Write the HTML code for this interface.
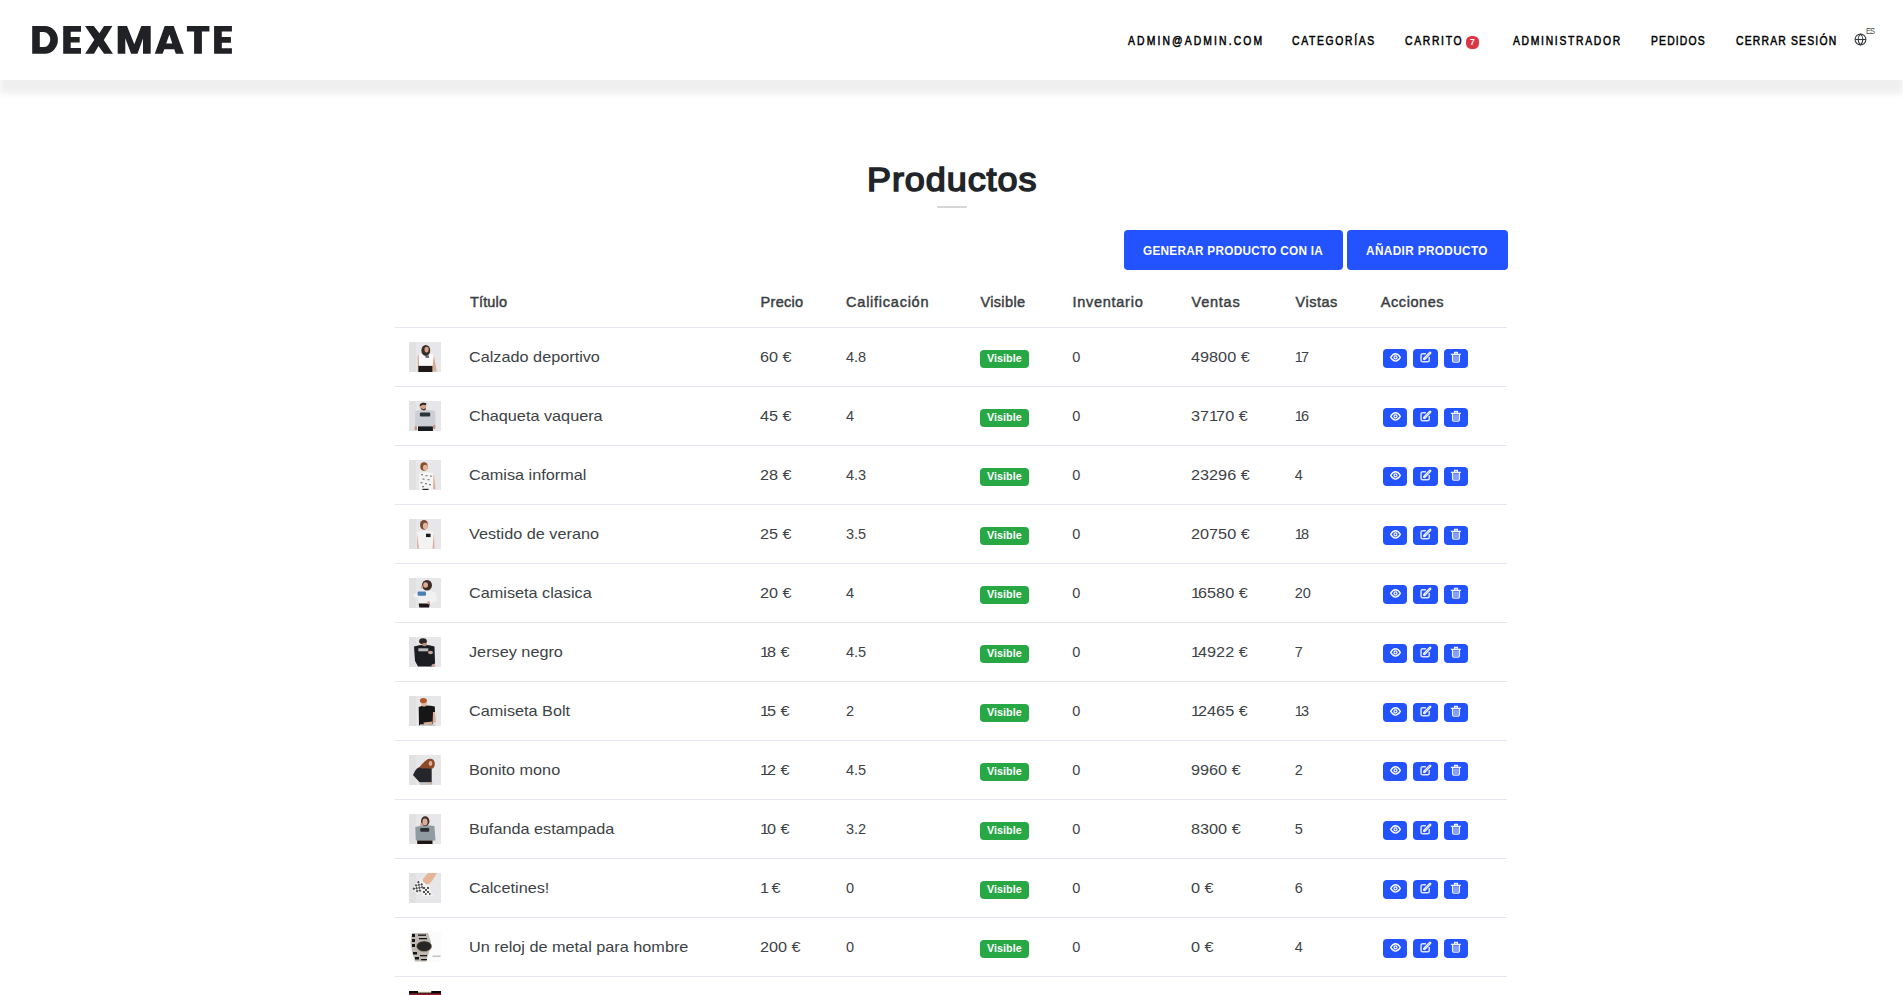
<!DOCTYPE html>
<html lang="es">
<head>
<meta charset="utf-8">
<title>Productos</title>
<style>
*{box-sizing:border-box;margin:0;padding:0}
html,body{width:1903px;height:995px;overflow:hidden;background:#fff;font-family:"Liberation Sans",sans-serif;color:#212529}
.t{position:absolute;line-height:1;white-space:nowrap}
.hdr{position:absolute;left:0;top:0;width:1903px;height:80px;background:#fff;box-shadow:0 14px 6px rgba(0,0,0,0.063)}

.badge{position:absolute;background:#dc3545;border-radius:4px}
.uline{position:absolute;left:937px;top:206px;width:30px;height:2px;background:#d6d6d6}
.btn{position:absolute;top:230px;height:40px;background:#2352ff;border-radius:4px}
.hl{position:absolute;left:395px;width:1112px;height:1px;background:#e3e6f0}
.img{position:absolute;left:409px;width:32px;height:30px;background:#e8e8ea;overflow:hidden}
.vis{position:absolute;left:980px;width:49px;height:18px;background:#28a745;border-radius:4px}
.ab{position:absolute;width:24px;height:19px;background:#2352ff;border-radius:4px}
.ab svg{position:absolute;left:5px;top:2px}
</style>
</head>
<body>
<div class="hdr"></div>
<div class="uline"></div>
<div class="btn" style="left:1124px;width:219px"></div>
<div class="btn" style="left:1347px;width:161px"></div>
<svg style="position:absolute;left:0;top:0" width="260" height="80" viewBox="0 0 260 80"><g fill="#202124" fill-rule="evenodd">
<path d="M32.2 25.9H45A12.9 13.9 0 0 1 45 53.7H32.2ZM39.8 32V47.1H43.5A6.8 7.55 0 0 0 43.5 32Z"/>
<path d="M63.2 25.9H81V31.7H70.7V37H79.7V42.6H70.7V47.9H81V53.8H63.2Z"/>
<path d="M85 25.9H93.8L99.4 33.3L104 25.9H112.4L103.8 39.9L112.9 53.8H104.1L98.5 45.9L94 53.8H85.1L94.3 39.8Z"/>
<path d="M117.7 25.9H127L134.3 44.2L141.3 25.9H150.7V53.7H143V38.5L137.5 53.7H131.1L125.3 38.3V53.7H117.7Z"/>
<path d="M154.8 53.7L164.7 25.9H173.7L183.8 53.7H175.8L174.3 49.2H164.3L162.6 53.7ZM169.4 34.4L172.3 43.6H166.2Z"/>
<path d="M186.9 25.9H209.4V31.5H201.9V53.7H194.1V31.5H186.9Z"/>
<path d="M214.1 25.9H231.9V31.6H221.8V37.1H230.9V42.7H221.8V48.2H231.9V53.8H214.1Z"/>
</g></svg>
<div class="t " style="left:1128.10px;top:34.86px;font-size:12.21px;font-weight:400;letter-spacing:2.495px;color:#000;transform:scaleX(0.85);transform-origin:0 0;-webkit-text-stroke:0.5px #000">ADMIN@ADMIN.COM</div>
<div class="t " style="left:1292.10px;top:34.86px;font-size:12.21px;font-weight:400;letter-spacing:1.952px;color:#000;transform:scaleX(0.85);transform-origin:0 0;-webkit-text-stroke:0.5px #000">CATEGORÍAS</div>
<div class="t " style="left:1404.70px;top:34.86px;font-size:12.21px;font-weight:400;letter-spacing:1.978px;color:#000;transform:scaleX(0.85);transform-origin:0 0;-webkit-text-stroke:0.5px #000">CARRITO</div>
<div class="t " style="left:1512.80px;top:34.86px;font-size:12.21px;font-weight:400;letter-spacing:1.984px;color:#000;transform:scaleX(0.85);transform-origin:0 0;-webkit-text-stroke:0.5px #000">ADMINISTRADOR</div>
<div class="t " style="left:1650.90px;top:34.86px;font-size:12.21px;font-weight:400;letter-spacing:1.370px;color:#000;transform:scaleX(0.85);transform-origin:0 0;-webkit-text-stroke:0.5px #000">PEDIDOS</div>
<div class="t " style="left:1735.50px;top:34.86px;font-size:12.21px;font-weight:400;letter-spacing:1.400px;color:#000;transform:scaleX(0.85);transform-origin:0 0;-webkit-text-stroke:0.5px #000">CERRAR SESIÓN</div>
<div style="position:absolute;left:1466px;top:36px;width:13px;height:13px;border-radius:5.5px;background:#dc3545"></div>
<svg style="position:absolute;left:1850px;top:30px" width="20" height="20" viewBox="0 0 20 20"><g fill="none" stroke="#343a40" stroke-width="1.1"><circle cx="10.5" cy="9.5" r="5.4"/><path d="M10.5 4.1C7.4 6.5 7.4 12.5 10.5 14.9C13.6 12.5 13.6 6.5 10.5 4.1Z"/><path d="M5.1 9.5H15.9"/></g></svg><div class="t " style="left:1470.00px;top:37.62px;font-size:8.60px;font-weight:700;letter-spacing:0.000px;color:#fff;">7</div><div class="t " style="left:1865.80px;top:27.23px;font-size:8.94px;font-weight:400;letter-spacing:-1.101px;color:#4a4a4a;transform:scaleX(0.85);transform-origin:0 0;">ES</div>
<div class="t " style="left:866.60px;top:164.31px;font-size:32.70px;font-weight:400;letter-spacing:0.857px;color:#212529;transform:scaleX(1.1);transform-origin:0 0;-webkit-text-stroke:1.5px #212529">Productos</div>
<div class="t " style="left:1143.00px;top:243.88px;font-size:13.37px;font-weight:700;letter-spacing:0.326px;color:#fff;transform:scaleX(0.88);transform-origin:0 0;">GENERAR PRODUCTO CON IA</div>
<div class="t " style="left:1366.40px;top:243.88px;font-size:13.37px;font-weight:700;letter-spacing:0.442px;color:#fff;transform:scaleX(0.88);transform-origin:0 0;">AÑADIR PRODUCTO</div>
<div class="t " style="left:469.90px;top:294.89px;font-size:14.53px;font-weight:400;letter-spacing:0.170px;color:#3a3e42;-webkit-text-stroke:0.45px #3a3e42">Título</div>
<div class="t " style="left:760.60px;top:294.89px;font-size:14.53px;font-weight:400;letter-spacing:0.279px;color:#3a3e42;-webkit-text-stroke:0.45px #3a3e42">Precio</div>
<div class="t " style="left:846.10px;top:294.89px;font-size:14.53px;font-weight:400;letter-spacing:0.744px;color:#3a3e42;-webkit-text-stroke:0.45px #3a3e42">Calificación</div>
<div class="t " style="left:980.40px;top:294.89px;font-size:14.53px;font-weight:400;letter-spacing:0.357px;color:#3a3e42;-webkit-text-stroke:0.45px #3a3e42">Visible</div>
<div class="t " style="left:1072.40px;top:294.89px;font-size:14.53px;font-weight:400;letter-spacing:0.729px;color:#3a3e42;-webkit-text-stroke:0.45px #3a3e42">Inventario</div>
<div class="t " style="left:1191.60px;top:294.89px;font-size:14.53px;font-weight:400;letter-spacing:0.730px;color:#3a3e42;-webkit-text-stroke:0.45px #3a3e42">Ventas</div>
<div class="t " style="left:1295.60px;top:294.89px;font-size:14.53px;font-weight:400;letter-spacing:0.477px;color:#3a3e42;-webkit-text-stroke:0.45px #3a3e42">Vistas</div>
<div class="t " style="left:1380.80px;top:294.89px;font-size:14.53px;font-weight:400;letter-spacing:0.545px;color:#3a3e42;-webkit-text-stroke:0.45px #3a3e42">Acciones</div>
<div class="hl" style="top:327px"></div>
<div class="t " style="left:468.80px;top:349.72px;font-size:14.50px;font-weight:400;letter-spacing:0.000px;color:#3d4246;transform:scaleX(1.12);transform-origin:0 0;">Calzado deportivo</div>
<div class="t num" style="left:759.90px;top:349.72px;font-size:14.50px;font-weight:400;letter-spacing:0.000px;color:#3d4246;transform:scaleX(1.12);transform-origin:0 0;letter-spacing:0px">60 €</div>
<div class="t num" style="left:846.00px;top:349.72px;font-size:14.50px;font-weight:400;letter-spacing:0.000px;color:#3d4246;">4.8</div>
<div class="t num" style="left:1072.20px;top:349.72px;font-size:14.50px;font-weight:400;letter-spacing:0.000px;color:#3d4246;">0</div>
<div class="t num" style="left:1190.60px;top:349.72px;font-size:14.50px;font-weight:400;letter-spacing:0.000px;color:#3d4246;transform:scaleX(1.12);transform-origin:0 0;letter-spacing:0px">49800 €</div>
<div class="t num" style="left:1294.80px;top:349.72px;font-size:14.50px;font-weight:400;letter-spacing:0.000px;color:#3d4246;"><span style="margin-right:-1.8px">1</span>7</div>
<svg class="img" style="top:342px" width="32" height="30" viewBox="0 0 32 30"><rect width="32" height="30" fill="#e7e7e9"/><rect x="0" y="0" width="7" height="30" fill="#dcdcde" opacity="0.5"/><path d="M8.6 13.5L11 12.5L11.3 29.5L8.8 29.5Z" fill="#d8ab93"/><path d="M22.3 13L25 13.5L27.7 29.5L24.5 29.5Z" fill="#d8ab93"/><path d="M9.7 12.5Q16 10.5 25 12.5L23.5 24H10.2Z" fill="#f8f8f8"/><rect x="9.4" y="23.9" width="14.1" height="6.1" fill="#1f1818"/><ellipse cx="16.8" cy="8.4" rx="4.4" ry="5.5" fill="#3a2b24"/><ellipse cx="17.6" cy="7.6" rx="2.1" ry="2.8" fill="#d6a48c"/><rect x="16.5" y="13.5" width="3.5" height="2.3" fill="#556070"/></svg>
<div class="vis" style="top:350px"></div>
<div class="t " style="left:987.10px;top:352.80px;font-size:10.75px;font-weight:700;letter-spacing:0.023px;color:#fff;">Visible</div>
<div class="ab" style="left:1383px;top:349px"><svg style="position:absolute;left:0;top:0" width="24" height="19" viewBox="0 0 24 19"><g fill="none" stroke="#fff" stroke-width="1.35"><path d="M7.7 8.4C9 6.1 10.5 4.75 12.5 4.75C14.5 4.75 16 6.1 17.3 8.4C16 10.7 14.5 12.05 12.5 12.05C10.5 12.05 9 10.7 7.7 8.4Z"/><circle cx="12.5" cy="8.4" r="1.5" stroke-width="1.2"/></g></svg></div>
<div class="ab" style="left:1413px;top:349px;width:25px"><svg style="position:absolute;left:0;top:0" width="25" height="19" viewBox="0 0 25 19"><path d="M12.9 4.65H9.6Q8.05 4.65 8.05 6.2V11.3Q8.05 12.85 9.6 12.85H14.7Q16.25 12.85 16.25 11.3V8" fill="none" stroke="#dfe5ff" stroke-width="1.5"/><path d="M11.4 9.7L17.1 3.9" stroke="#f4f6ff" stroke-width="2.7" stroke-linecap="round"/><path d="M10.3 11.1L11.0 8.9L12.3 10.3Z" fill="#f4f6ff"/><path d="M11.9 9.2L16.9 4.1" stroke="#8ea2ff" stroke-width="0.6"/></svg></div>
<div class="ab" style="left:1444px;top:349px"><svg style="position:absolute;left:0;top:0" width="24" height="19" viewBox="0 0 24 19"><rect x="9.3" y="6.4" width="5.4" height="5.6" fill="#fff" opacity="0.45"/><g fill="none" stroke="#f0f3ff" stroke-width="1.3"><path d="M8.6 6V11.8Q8.6 13.1 9.9 13.1H14.1Q15.4 13.1 15.4 11.8V6"/><path d="M6.8 5.35H16.9"/><path d="M10.6 5.2V3.5H13.4V5.2"/></g></svg></div>
<div class="hl" style="top:386px"></div>
<div class="t " style="left:468.80px;top:408.72px;font-size:14.50px;font-weight:400;letter-spacing:0.000px;color:#3d4246;transform:scaleX(1.12);transform-origin:0 0;">Chaqueta vaquera</div>
<div class="t num" style="left:759.90px;top:408.72px;font-size:14.50px;font-weight:400;letter-spacing:0.000px;color:#3d4246;transform:scaleX(1.12);transform-origin:0 0;letter-spacing:0px">45 €</div>
<div class="t num" style="left:846.00px;top:408.72px;font-size:14.50px;font-weight:400;letter-spacing:0.000px;color:#3d4246;">4</div>
<div class="t num" style="left:1072.20px;top:408.72px;font-size:14.50px;font-weight:400;letter-spacing:0.000px;color:#3d4246;">0</div>
<div class="t num" style="left:1190.60px;top:408.72px;font-size:14.50px;font-weight:400;letter-spacing:0.000px;color:#3d4246;transform:scaleX(1.12);transform-origin:0 0;letter-spacing:0px">37<span style="margin-right:-1.8px">1</span>70 €</div>
<div class="t num" style="left:1294.80px;top:408.72px;font-size:14.50px;font-weight:400;letter-spacing:0.000px;color:#3d4246;"><span style="margin-right:-1.8px">1</span>6</div>
<svg class="img" style="top:401px" width="32" height="30" viewBox="0 0 32 30"><rect width="32" height="30" fill="#e7e7e9"/><rect x="0" y="0" width="7" height="30" fill="#dcdcde" opacity="0.5"/><path d="M6.3 10Q16 7.5 26.2 10L26.5 24.5L22 26H10L6 24.5Z" fill="#ccd0d5"/><rect x="10.9" y="11.6" width="10.3" height="3.9" fill="#2c343b" rx="1"/><rect x="9" y="25.4" width="14.9" height="4.6" fill="#171a1e"/><ellipse cx="6.8" cy="27.2" rx="1.3" ry="2.3" fill="#c99580"/><ellipse cx="25.2" cy="26" rx="1.4" ry="2.2" fill="#c99580"/><ellipse cx="14" cy="5.3" rx="3.3" ry="3.8" fill="#d4a68e"/><path d="M10.5 4.6Q12 0.8 17.4 2.2L17 4.3Q13.5 3 11.6 5.2Z" fill="#2d241f"/><path d="M12 6.5Q14.5 10 16.8 6.5L16.5 8.9Q14.5 10 12.5 8.6Z" fill="#3b2d26"/></svg>
<div class="vis" style="top:409px"></div>
<div class="t " style="left:987.10px;top:411.80px;font-size:10.75px;font-weight:700;letter-spacing:0.023px;color:#fff;">Visible</div>
<div class="ab" style="left:1383px;top:408px"><svg style="position:absolute;left:0;top:0" width="24" height="19" viewBox="0 0 24 19"><g fill="none" stroke="#fff" stroke-width="1.35"><path d="M7.7 8.4C9 6.1 10.5 4.75 12.5 4.75C14.5 4.75 16 6.1 17.3 8.4C16 10.7 14.5 12.05 12.5 12.05C10.5 12.05 9 10.7 7.7 8.4Z"/><circle cx="12.5" cy="8.4" r="1.5" stroke-width="1.2"/></g></svg></div>
<div class="ab" style="left:1413px;top:408px;width:25px"><svg style="position:absolute;left:0;top:0" width="25" height="19" viewBox="0 0 25 19"><path d="M12.9 4.65H9.6Q8.05 4.65 8.05 6.2V11.3Q8.05 12.85 9.6 12.85H14.7Q16.25 12.85 16.25 11.3V8" fill="none" stroke="#dfe5ff" stroke-width="1.5"/><path d="M11.4 9.7L17.1 3.9" stroke="#f4f6ff" stroke-width="2.7" stroke-linecap="round"/><path d="M10.3 11.1L11.0 8.9L12.3 10.3Z" fill="#f4f6ff"/><path d="M11.9 9.2L16.9 4.1" stroke="#8ea2ff" stroke-width="0.6"/></svg></div>
<div class="ab" style="left:1444px;top:408px"><svg style="position:absolute;left:0;top:0" width="24" height="19" viewBox="0 0 24 19"><rect x="9.3" y="6.4" width="5.4" height="5.6" fill="#fff" opacity="0.45"/><g fill="none" stroke="#f0f3ff" stroke-width="1.3"><path d="M8.6 6V11.8Q8.6 13.1 9.9 13.1H14.1Q15.4 13.1 15.4 11.8V6"/><path d="M6.8 5.35H16.9"/><path d="M10.6 5.2V3.5H13.4V5.2"/></g></svg></div>
<div class="hl" style="top:445px"></div>
<div class="t " style="left:468.80px;top:467.72px;font-size:14.50px;font-weight:400;letter-spacing:0.000px;color:#3d4246;transform:scaleX(1.12);transform-origin:0 0;">Camisa informal</div>
<div class="t num" style="left:759.90px;top:467.72px;font-size:14.50px;font-weight:400;letter-spacing:0.000px;color:#3d4246;transform:scaleX(1.12);transform-origin:0 0;letter-spacing:0px">28 €</div>
<div class="t num" style="left:846.00px;top:467.72px;font-size:14.50px;font-weight:400;letter-spacing:0.000px;color:#3d4246;">4.3</div>
<div class="t num" style="left:1072.20px;top:467.72px;font-size:14.50px;font-weight:400;letter-spacing:0.000px;color:#3d4246;">0</div>
<div class="t num" style="left:1190.60px;top:467.72px;font-size:14.50px;font-weight:400;letter-spacing:0.000px;color:#3d4246;transform:scaleX(1.12);transform-origin:0 0;letter-spacing:0px">23296 €</div>
<div class="t num" style="left:1294.80px;top:467.72px;font-size:14.50px;font-weight:400;letter-spacing:0.000px;color:#3d4246;">4</div>
<svg class="img" style="top:460px" width="32" height="30" viewBox="0 0 32 30"><rect width="32" height="30" fill="#e7e7e9"/><rect x="0" y="0" width="7" height="30" fill="#dcdcde" opacity="0.5"/><path d="M21.5 15L25 14.5L26.5 29H23Z" fill="#dcb29c"/><path d="M10.3 13.5Q16.5 11 24.5 13.5L24 29.6H10.1Z" fill="#f5f5f5"/><g fill="#5c5c5c" opacity="0.75"><rect x="12" y="14" width="2" height="1.3"/><rect x="16.5" y="15" width="2" height="1.3"/><rect x="21" y="15.5" width="1.8" height="1.3"/><rect x="13.5" y="18.5" width="2" height="1.3"/><rect x="18.5" y="19" width="2" height="1.3"/><rect x="11.5" y="22" width="2" height="1.3"/><rect x="16" y="23" width="2" height="1.3"/><rect x="20" y="24" width="2" height="1.3"/><rect x="13" y="26" width="2" height="1.3"/></g><rect x="13.5" y="28.8" width="6" height="1.2" fill="#222"/><ellipse cx="15" cy="6.5" rx="3.7" ry="4.3" fill="#8c4c2c"/><ellipse cx="16.3" cy="7.6" rx="2.4" ry="2.9" fill="#e0b49c"/></svg>
<div class="vis" style="top:468px"></div>
<div class="t " style="left:987.10px;top:470.80px;font-size:10.75px;font-weight:700;letter-spacing:0.023px;color:#fff;">Visible</div>
<div class="ab" style="left:1383px;top:467px"><svg style="position:absolute;left:0;top:0" width="24" height="19" viewBox="0 0 24 19"><g fill="none" stroke="#fff" stroke-width="1.35"><path d="M7.7 8.4C9 6.1 10.5 4.75 12.5 4.75C14.5 4.75 16 6.1 17.3 8.4C16 10.7 14.5 12.05 12.5 12.05C10.5 12.05 9 10.7 7.7 8.4Z"/><circle cx="12.5" cy="8.4" r="1.5" stroke-width="1.2"/></g></svg></div>
<div class="ab" style="left:1413px;top:467px;width:25px"><svg style="position:absolute;left:0;top:0" width="25" height="19" viewBox="0 0 25 19"><path d="M12.9 4.65H9.6Q8.05 4.65 8.05 6.2V11.3Q8.05 12.85 9.6 12.85H14.7Q16.25 12.85 16.25 11.3V8" fill="none" stroke="#dfe5ff" stroke-width="1.5"/><path d="M11.4 9.7L17.1 3.9" stroke="#f4f6ff" stroke-width="2.7" stroke-linecap="round"/><path d="M10.3 11.1L11.0 8.9L12.3 10.3Z" fill="#f4f6ff"/><path d="M11.9 9.2L16.9 4.1" stroke="#8ea2ff" stroke-width="0.6"/></svg></div>
<div class="ab" style="left:1444px;top:467px"><svg style="position:absolute;left:0;top:0" width="24" height="19" viewBox="0 0 24 19"><rect x="9.3" y="6.4" width="5.4" height="5.6" fill="#fff" opacity="0.45"/><g fill="none" stroke="#f0f3ff" stroke-width="1.3"><path d="M8.6 6V11.8Q8.6 13.1 9.9 13.1H14.1Q15.4 13.1 15.4 11.8V6"/><path d="M6.8 5.35H16.9"/><path d="M10.6 5.2V3.5H13.4V5.2"/></g></svg></div>
<div class="hl" style="top:504px"></div>
<div class="t " style="left:468.80px;top:526.72px;font-size:14.50px;font-weight:400;letter-spacing:0.000px;color:#3d4246;transform:scaleX(1.12);transform-origin:0 0;">Vestido de verano</div>
<div class="t num" style="left:759.90px;top:526.72px;font-size:14.50px;font-weight:400;letter-spacing:0.000px;color:#3d4246;transform:scaleX(1.12);transform-origin:0 0;letter-spacing:0px">25 €</div>
<div class="t num" style="left:846.00px;top:526.72px;font-size:14.50px;font-weight:400;letter-spacing:0.000px;color:#3d4246;">3.5</div>
<div class="t num" style="left:1072.20px;top:526.72px;font-size:14.50px;font-weight:400;letter-spacing:0.000px;color:#3d4246;">0</div>
<div class="t num" style="left:1190.60px;top:526.72px;font-size:14.50px;font-weight:400;letter-spacing:0.000px;color:#3d4246;transform:scaleX(1.12);transform-origin:0 0;letter-spacing:0px">20750 €</div>
<div class="t num" style="left:1294.80px;top:526.72px;font-size:14.50px;font-weight:400;letter-spacing:0.000px;color:#3d4246;"><span style="margin-right:-1.8px">1</span>8</div>
<svg class="img" style="top:519px" width="32" height="30" viewBox="0 0 32 30"><rect width="32" height="30" fill="#e7e7e9"/><rect x="0" y="0" width="7" height="30" fill="#dcdcde" opacity="0.5"/><path d="M8 15L10.5 14.5L11 29.6H8.2Z" fill="#d9ae98"/><path d="M22 15L25 14.5L25.5 29.6H22.5Z" fill="#d9ae98"/><path d="M7.8 13Q16 10 25 13L23.5 29.6H10Z" fill="#f3f3f3"/><rect x="17" y="14.7" width="4.6" height="3.4" fill="#1c1c20"/><ellipse cx="15" cy="5.8" rx="4" ry="4.9" fill="#7c4b30"/><ellipse cx="16.4" cy="6.9" rx="2.5" ry="3.2" fill="#e2b7a0"/></svg>
<div class="vis" style="top:527px"></div>
<div class="t " style="left:987.10px;top:529.80px;font-size:10.75px;font-weight:700;letter-spacing:0.023px;color:#fff;">Visible</div>
<div class="ab" style="left:1383px;top:526px"><svg style="position:absolute;left:0;top:0" width="24" height="19" viewBox="0 0 24 19"><g fill="none" stroke="#fff" stroke-width="1.35"><path d="M7.7 8.4C9 6.1 10.5 4.75 12.5 4.75C14.5 4.75 16 6.1 17.3 8.4C16 10.7 14.5 12.05 12.5 12.05C10.5 12.05 9 10.7 7.7 8.4Z"/><circle cx="12.5" cy="8.4" r="1.5" stroke-width="1.2"/></g></svg></div>
<div class="ab" style="left:1413px;top:526px;width:25px"><svg style="position:absolute;left:0;top:0" width="25" height="19" viewBox="0 0 25 19"><path d="M12.9 4.65H9.6Q8.05 4.65 8.05 6.2V11.3Q8.05 12.85 9.6 12.85H14.7Q16.25 12.85 16.25 11.3V8" fill="none" stroke="#dfe5ff" stroke-width="1.5"/><path d="M11.4 9.7L17.1 3.9" stroke="#f4f6ff" stroke-width="2.7" stroke-linecap="round"/><path d="M10.3 11.1L11.0 8.9L12.3 10.3Z" fill="#f4f6ff"/><path d="M11.9 9.2L16.9 4.1" stroke="#8ea2ff" stroke-width="0.6"/></svg></div>
<div class="ab" style="left:1444px;top:526px"><svg style="position:absolute;left:0;top:0" width="24" height="19" viewBox="0 0 24 19"><rect x="9.3" y="6.4" width="5.4" height="5.6" fill="#fff" opacity="0.45"/><g fill="none" stroke="#f0f3ff" stroke-width="1.3"><path d="M8.6 6V11.8Q8.6 13.1 9.9 13.1H14.1Q15.4 13.1 15.4 11.8V6"/><path d="M6.8 5.35H16.9"/><path d="M10.6 5.2V3.5H13.4V5.2"/></g></svg></div>
<div class="hl" style="top:563px"></div>
<div class="t " style="left:468.80px;top:585.72px;font-size:14.50px;font-weight:400;letter-spacing:0.000px;color:#3d4246;transform:scaleX(1.12);transform-origin:0 0;">Camiseta clasica</div>
<div class="t num" style="left:759.90px;top:585.72px;font-size:14.50px;font-weight:400;letter-spacing:0.000px;color:#3d4246;transform:scaleX(1.12);transform-origin:0 0;letter-spacing:0px">20 €</div>
<div class="t num" style="left:846.00px;top:585.72px;font-size:14.50px;font-weight:400;letter-spacing:0.000px;color:#3d4246;">4</div>
<div class="t num" style="left:1072.20px;top:585.72px;font-size:14.50px;font-weight:400;letter-spacing:0.000px;color:#3d4246;">0</div>
<div class="t num" style="left:1190.60px;top:585.72px;font-size:14.50px;font-weight:400;letter-spacing:0.000px;color:#3d4246;transform:scaleX(1.12);transform-origin:0 0;letter-spacing:0px"><span style="margin-right:-1.8px">1</span>6580 €</div>
<div class="t num" style="left:1294.80px;top:585.72px;font-size:14.50px;font-weight:400;letter-spacing:0.000px;color:#3d4246;">20</div>
<svg class="img" style="top:578px" width="32" height="30" viewBox="0 0 32 30"><rect width="32" height="30" fill="#e7e7e9"/><rect x="0" y="0" width="7" height="30" fill="#dcdcde" opacity="0.5"/><path d="M4 17Q10 12.5 17 12L26 14Q29 20 27.5 23L21 25.8H10L9.5 19L5.5 19.5Z" fill="#f1f1f1"/><rect x="8.6" y="13.6" width="8.4" height="4.2" fill="#4b80b2" rx="1"/><path d="M9.7 25.4H20.8L20 29.6H10.3Z" fill="#1e1616"/><ellipse cx="19.5" cy="24.8" rx="1.3" ry="1.8" fill="#d7a08c"/><ellipse cx="18" cy="7.2" rx="5" ry="5.2" fill="#3b2c26"/><ellipse cx="16.6" cy="7" rx="2.4" ry="2.8" fill="#dcae98"/><ellipse cx="13" cy="9" rx="1.2" ry="1.5" fill="#d7a08c"/></svg>
<div class="vis" style="top:586px"></div>
<div class="t " style="left:987.10px;top:588.80px;font-size:10.75px;font-weight:700;letter-spacing:0.023px;color:#fff;">Visible</div>
<div class="ab" style="left:1383px;top:585px"><svg style="position:absolute;left:0;top:0" width="24" height="19" viewBox="0 0 24 19"><g fill="none" stroke="#fff" stroke-width="1.35"><path d="M7.7 8.4C9 6.1 10.5 4.75 12.5 4.75C14.5 4.75 16 6.1 17.3 8.4C16 10.7 14.5 12.05 12.5 12.05C10.5 12.05 9 10.7 7.7 8.4Z"/><circle cx="12.5" cy="8.4" r="1.5" stroke-width="1.2"/></g></svg></div>
<div class="ab" style="left:1413px;top:585px;width:25px"><svg style="position:absolute;left:0;top:0" width="25" height="19" viewBox="0 0 25 19"><path d="M12.9 4.65H9.6Q8.05 4.65 8.05 6.2V11.3Q8.05 12.85 9.6 12.85H14.7Q16.25 12.85 16.25 11.3V8" fill="none" stroke="#dfe5ff" stroke-width="1.5"/><path d="M11.4 9.7L17.1 3.9" stroke="#f4f6ff" stroke-width="2.7" stroke-linecap="round"/><path d="M10.3 11.1L11.0 8.9L12.3 10.3Z" fill="#f4f6ff"/><path d="M11.9 9.2L16.9 4.1" stroke="#8ea2ff" stroke-width="0.6"/></svg></div>
<div class="ab" style="left:1444px;top:585px"><svg style="position:absolute;left:0;top:0" width="24" height="19" viewBox="0 0 24 19"><rect x="9.3" y="6.4" width="5.4" height="5.6" fill="#fff" opacity="0.45"/><g fill="none" stroke="#f0f3ff" stroke-width="1.3"><path d="M8.6 6V11.8Q8.6 13.1 9.9 13.1H14.1Q15.4 13.1 15.4 11.8V6"/><path d="M6.8 5.35H16.9"/><path d="M10.6 5.2V3.5H13.4V5.2"/></g></svg></div>
<div class="hl" style="top:622px"></div>
<div class="t " style="left:468.80px;top:644.72px;font-size:14.50px;font-weight:400;letter-spacing:0.000px;color:#3d4246;transform:scaleX(1.12);transform-origin:0 0;">Jersey negro</div>
<div class="t num" style="left:759.90px;top:644.72px;font-size:14.50px;font-weight:400;letter-spacing:0.000px;color:#3d4246;transform:scaleX(1.12);transform-origin:0 0;letter-spacing:0px"><span style="margin-right:-1.8px">1</span>8 €</div>
<div class="t num" style="left:846.00px;top:644.72px;font-size:14.50px;font-weight:400;letter-spacing:0.000px;color:#3d4246;">4.5</div>
<div class="t num" style="left:1072.20px;top:644.72px;font-size:14.50px;font-weight:400;letter-spacing:0.000px;color:#3d4246;">0</div>
<div class="t num" style="left:1190.60px;top:644.72px;font-size:14.50px;font-weight:400;letter-spacing:0.000px;color:#3d4246;transform:scaleX(1.12);transform-origin:0 0;letter-spacing:0px"><span style="margin-right:-1.8px">1</span>4922 €</div>
<div class="t num" style="left:1294.80px;top:644.72px;font-size:14.50px;font-weight:400;letter-spacing:0.000px;color:#3d4246;">7</div>
<svg class="img" style="top:637px" width="32" height="30" viewBox="0 0 32 30"><rect width="32" height="30" fill="#e7e7e9"/><rect x="0" y="0" width="7" height="30" fill="#dcdcde" opacity="0.5"/><path d="M5 9.5Q15 6 25.5 9.5L26 26L24 29.6H9L6 24Z" fill="#1b1d23"/><rect x="9.4" y="11.3" width="9.9" height="3" fill="#d8d8d8" opacity="0.85"/><ellipse cx="21.5" cy="15.5" rx="2.5" ry="1.7" fill="#c9a293"/><ellipse cx="24.5" cy="28.5" rx="2" ry="1.5" fill="#d2a894"/><ellipse cx="14" cy="4.3" rx="3.9" ry="3" fill="#2b2420"/><ellipse cx="15.5" cy="7.5" rx="2.6" ry="1.8" fill="#b98c78"/></svg>
<div class="vis" style="top:645px"></div>
<div class="t " style="left:987.10px;top:647.80px;font-size:10.75px;font-weight:700;letter-spacing:0.023px;color:#fff;">Visible</div>
<div class="ab" style="left:1383px;top:644px"><svg style="position:absolute;left:0;top:0" width="24" height="19" viewBox="0 0 24 19"><g fill="none" stroke="#fff" stroke-width="1.35"><path d="M7.7 8.4C9 6.1 10.5 4.75 12.5 4.75C14.5 4.75 16 6.1 17.3 8.4C16 10.7 14.5 12.05 12.5 12.05C10.5 12.05 9 10.7 7.7 8.4Z"/><circle cx="12.5" cy="8.4" r="1.5" stroke-width="1.2"/></g></svg></div>
<div class="ab" style="left:1413px;top:644px;width:25px"><svg style="position:absolute;left:0;top:0" width="25" height="19" viewBox="0 0 25 19"><path d="M12.9 4.65H9.6Q8.05 4.65 8.05 6.2V11.3Q8.05 12.85 9.6 12.85H14.7Q16.25 12.85 16.25 11.3V8" fill="none" stroke="#dfe5ff" stroke-width="1.5"/><path d="M11.4 9.7L17.1 3.9" stroke="#f4f6ff" stroke-width="2.7" stroke-linecap="round"/><path d="M10.3 11.1L11.0 8.9L12.3 10.3Z" fill="#f4f6ff"/><path d="M11.9 9.2L16.9 4.1" stroke="#8ea2ff" stroke-width="0.6"/></svg></div>
<div class="ab" style="left:1444px;top:644px"><svg style="position:absolute;left:0;top:0" width="24" height="19" viewBox="0 0 24 19"><rect x="9.3" y="6.4" width="5.4" height="5.6" fill="#fff" opacity="0.45"/><g fill="none" stroke="#f0f3ff" stroke-width="1.3"><path d="M8.6 6V11.8Q8.6 13.1 9.9 13.1H14.1Q15.4 13.1 15.4 11.8V6"/><path d="M6.8 5.35H16.9"/><path d="M10.6 5.2V3.5H13.4V5.2"/></g></svg></div>
<div class="hl" style="top:681px"></div>
<div class="t " style="left:468.80px;top:703.72px;font-size:14.50px;font-weight:400;letter-spacing:0.000px;color:#3d4246;transform:scaleX(1.12);transform-origin:0 0;">Camiseta Bolt</div>
<div class="t num" style="left:759.90px;top:703.72px;font-size:14.50px;font-weight:400;letter-spacing:0.000px;color:#3d4246;transform:scaleX(1.12);transform-origin:0 0;letter-spacing:0px"><span style="margin-right:-1.8px">1</span>5 €</div>
<div class="t num" style="left:846.00px;top:703.72px;font-size:14.50px;font-weight:400;letter-spacing:0.000px;color:#3d4246;">2</div>
<div class="t num" style="left:1072.20px;top:703.72px;font-size:14.50px;font-weight:400;letter-spacing:0.000px;color:#3d4246;">0</div>
<div class="t num" style="left:1190.60px;top:703.72px;font-size:14.50px;font-weight:400;letter-spacing:0.000px;color:#3d4246;transform:scaleX(1.12);transform-origin:0 0;letter-spacing:0px"><span style="margin-right:-1.8px">1</span>2465 €</div>
<div class="t num" style="left:1294.80px;top:703.72px;font-size:14.50px;font-weight:400;letter-spacing:0.000px;color:#3d4246;"><span style="margin-right:-1.8px">1</span>3</div>
<svg class="img" style="top:696px" width="32" height="30" viewBox="0 0 32 30"><rect width="32" height="30" fill="#e7e7e9"/><rect x="0" y="0" width="7" height="30" fill="#dcdcde" opacity="0.5"/><path d="M23 16L26 15.5L27 26L23 28Z" fill="#dcb19c"/><path d="M9.7 11Q16 8.5 25.8 10.5L26 16H24L23.5 29.2H10Z" fill="#161616"/><path d="M14.5 26.5L23.5 25.5L23 28.5L15 29Z" fill="#d7ab96"/><rect x="11" y="28.3" width="15" height="1.7" fill="#c8c8c8"/><ellipse cx="15" cy="7.2" rx="2.8" ry="3.4" fill="#e1b49e"/><ellipse cx="14.4" cy="4.6" rx="3.5" ry="2.6" fill="#b0582c"/></svg>
<div class="vis" style="top:704px"></div>
<div class="t " style="left:987.10px;top:706.80px;font-size:10.75px;font-weight:700;letter-spacing:0.023px;color:#fff;">Visible</div>
<div class="ab" style="left:1383px;top:703px"><svg style="position:absolute;left:0;top:0" width="24" height="19" viewBox="0 0 24 19"><g fill="none" stroke="#fff" stroke-width="1.35"><path d="M7.7 8.4C9 6.1 10.5 4.75 12.5 4.75C14.5 4.75 16 6.1 17.3 8.4C16 10.7 14.5 12.05 12.5 12.05C10.5 12.05 9 10.7 7.7 8.4Z"/><circle cx="12.5" cy="8.4" r="1.5" stroke-width="1.2"/></g></svg></div>
<div class="ab" style="left:1413px;top:703px;width:25px"><svg style="position:absolute;left:0;top:0" width="25" height="19" viewBox="0 0 25 19"><path d="M12.9 4.65H9.6Q8.05 4.65 8.05 6.2V11.3Q8.05 12.85 9.6 12.85H14.7Q16.25 12.85 16.25 11.3V8" fill="none" stroke="#dfe5ff" stroke-width="1.5"/><path d="M11.4 9.7L17.1 3.9" stroke="#f4f6ff" stroke-width="2.7" stroke-linecap="round"/><path d="M10.3 11.1L11.0 8.9L12.3 10.3Z" fill="#f4f6ff"/><path d="M11.9 9.2L16.9 4.1" stroke="#8ea2ff" stroke-width="0.6"/></svg></div>
<div class="ab" style="left:1444px;top:703px"><svg style="position:absolute;left:0;top:0" width="24" height="19" viewBox="0 0 24 19"><rect x="9.3" y="6.4" width="5.4" height="5.6" fill="#fff" opacity="0.45"/><g fill="none" stroke="#f0f3ff" stroke-width="1.3"><path d="M8.6 6V11.8Q8.6 13.1 9.9 13.1H14.1Q15.4 13.1 15.4 11.8V6"/><path d="M6.8 5.35H16.9"/><path d="M10.6 5.2V3.5H13.4V5.2"/></g></svg></div>
<div class="hl" style="top:740px"></div>
<div class="t " style="left:468.80px;top:762.72px;font-size:14.50px;font-weight:400;letter-spacing:0.000px;color:#3d4246;transform:scaleX(1.12);transform-origin:0 0;">Bonito mono</div>
<div class="t num" style="left:759.90px;top:762.72px;font-size:14.50px;font-weight:400;letter-spacing:0.000px;color:#3d4246;transform:scaleX(1.12);transform-origin:0 0;letter-spacing:0px"><span style="margin-right:-1.8px">1</span>2 €</div>
<div class="t num" style="left:846.00px;top:762.72px;font-size:14.50px;font-weight:400;letter-spacing:0.000px;color:#3d4246;">4.5</div>
<div class="t num" style="left:1072.20px;top:762.72px;font-size:14.50px;font-weight:400;letter-spacing:0.000px;color:#3d4246;">0</div>
<div class="t num" style="left:1190.60px;top:762.72px;font-size:14.50px;font-weight:400;letter-spacing:0.000px;color:#3d4246;transform:scaleX(1.12);transform-origin:0 0;letter-spacing:0px">9960 €</div>
<div class="t num" style="left:1294.80px;top:762.72px;font-size:14.50px;font-weight:400;letter-spacing:0.000px;color:#3d4246;">2</div>
<svg class="img" style="top:755px" width="32" height="30" viewBox="0 0 32 30"><rect width="32" height="30" fill="#e7e7e9"/><rect x="0" y="0" width="7" height="30" fill="#dcdcde" opacity="0.5"/><path d="M6 16Q9 11 16 10.5L22.7 13L22.7 27.7L11 27.7L4 20Z" fill="#24262c"/><path d="M10 27.3H22.5L22 30H11Z" fill="#c6c6c8"/><ellipse cx="22" cy="28.5" rx="1.4" ry="1" fill="#d8a894"/><path d="M10 13Q14 7 19 4Q25 2.5 25.8 8Q26 13 22.5 14Q18 13 14 13.5Z" fill="#8b4a2a"/><ellipse cx="21.5" cy="8.5" rx="1.8" ry="2.4" fill="#dcae98"/></svg>
<div class="vis" style="top:763px"></div>
<div class="t " style="left:987.10px;top:765.80px;font-size:10.75px;font-weight:700;letter-spacing:0.023px;color:#fff;">Visible</div>
<div class="ab" style="left:1383px;top:762px"><svg style="position:absolute;left:0;top:0" width="24" height="19" viewBox="0 0 24 19"><g fill="none" stroke="#fff" stroke-width="1.35"><path d="M7.7 8.4C9 6.1 10.5 4.75 12.5 4.75C14.5 4.75 16 6.1 17.3 8.4C16 10.7 14.5 12.05 12.5 12.05C10.5 12.05 9 10.7 7.7 8.4Z"/><circle cx="12.5" cy="8.4" r="1.5" stroke-width="1.2"/></g></svg></div>
<div class="ab" style="left:1413px;top:762px;width:25px"><svg style="position:absolute;left:0;top:0" width="25" height="19" viewBox="0 0 25 19"><path d="M12.9 4.65H9.6Q8.05 4.65 8.05 6.2V11.3Q8.05 12.85 9.6 12.85H14.7Q16.25 12.85 16.25 11.3V8" fill="none" stroke="#dfe5ff" stroke-width="1.5"/><path d="M11.4 9.7L17.1 3.9" stroke="#f4f6ff" stroke-width="2.7" stroke-linecap="round"/><path d="M10.3 11.1L11.0 8.9L12.3 10.3Z" fill="#f4f6ff"/><path d="M11.9 9.2L16.9 4.1" stroke="#8ea2ff" stroke-width="0.6"/></svg></div>
<div class="ab" style="left:1444px;top:762px"><svg style="position:absolute;left:0;top:0" width="24" height="19" viewBox="0 0 24 19"><rect x="9.3" y="6.4" width="5.4" height="5.6" fill="#fff" opacity="0.45"/><g fill="none" stroke="#f0f3ff" stroke-width="1.3"><path d="M8.6 6V11.8Q8.6 13.1 9.9 13.1H14.1Q15.4 13.1 15.4 11.8V6"/><path d="M6.8 5.35H16.9"/><path d="M10.6 5.2V3.5H13.4V5.2"/></g></svg></div>
<div class="hl" style="top:799px"></div>
<div class="t " style="left:468.80px;top:821.72px;font-size:14.50px;font-weight:400;letter-spacing:0.000px;color:#3d4246;transform:scaleX(1.12);transform-origin:0 0;">Bufanda estampada</div>
<div class="t num" style="left:759.90px;top:821.72px;font-size:14.50px;font-weight:400;letter-spacing:0.000px;color:#3d4246;transform:scaleX(1.12);transform-origin:0 0;letter-spacing:0px"><span style="margin-right:-1.8px">1</span>0 €</div>
<div class="t num" style="left:846.00px;top:821.72px;font-size:14.50px;font-weight:400;letter-spacing:0.000px;color:#3d4246;">3.2</div>
<div class="t num" style="left:1072.20px;top:821.72px;font-size:14.50px;font-weight:400;letter-spacing:0.000px;color:#3d4246;">0</div>
<div class="t num" style="left:1190.60px;top:821.72px;font-size:14.50px;font-weight:400;letter-spacing:0.000px;color:#3d4246;transform:scaleX(1.12);transform-origin:0 0;letter-spacing:0px">8300 €</div>
<div class="t num" style="left:1294.80px;top:821.72px;font-size:14.50px;font-weight:400;letter-spacing:0.000px;color:#3d4246;">5</div>
<svg class="img" style="top:814px" width="32" height="30" viewBox="0 0 32 30"><rect width="32" height="30" fill="#e7e7e9"/><rect x="0" y="0" width="7" height="30" fill="#dcdcde" opacity="0.5"/><path d="M6.3 13Q16 10 25.4 12L26.5 26.5H6.8Z" fill="#8f9ba1"/><rect x="11.2" y="14" width="9" height="3.8" fill="#2a2e33" rx="1"/><rect x="8.2" y="26.5" width="15.3" height="3.5" fill="#1d1414"/><ellipse cx="16.2" cy="7.2" rx="4.2" ry="5" fill="#3b2f2a"/><ellipse cx="16" cy="8" rx="2.6" ry="3.4" fill="#dcac9a"/><ellipse cx="12.5" cy="10.5" rx="1.3" ry="1.6" fill="#d7a08c"/></svg>
<div class="vis" style="top:822px"></div>
<div class="t " style="left:987.10px;top:824.80px;font-size:10.75px;font-weight:700;letter-spacing:0.023px;color:#fff;">Visible</div>
<div class="ab" style="left:1383px;top:821px"><svg style="position:absolute;left:0;top:0" width="24" height="19" viewBox="0 0 24 19"><g fill="none" stroke="#fff" stroke-width="1.35"><path d="M7.7 8.4C9 6.1 10.5 4.75 12.5 4.75C14.5 4.75 16 6.1 17.3 8.4C16 10.7 14.5 12.05 12.5 12.05C10.5 12.05 9 10.7 7.7 8.4Z"/><circle cx="12.5" cy="8.4" r="1.5" stroke-width="1.2"/></g></svg></div>
<div class="ab" style="left:1413px;top:821px;width:25px"><svg style="position:absolute;left:0;top:0" width="25" height="19" viewBox="0 0 25 19"><path d="M12.9 4.65H9.6Q8.05 4.65 8.05 6.2V11.3Q8.05 12.85 9.6 12.85H14.7Q16.25 12.85 16.25 11.3V8" fill="none" stroke="#dfe5ff" stroke-width="1.5"/><path d="M11.4 9.7L17.1 3.9" stroke="#f4f6ff" stroke-width="2.7" stroke-linecap="round"/><path d="M10.3 11.1L11.0 8.9L12.3 10.3Z" fill="#f4f6ff"/><path d="M11.9 9.2L16.9 4.1" stroke="#8ea2ff" stroke-width="0.6"/></svg></div>
<div class="ab" style="left:1444px;top:821px"><svg style="position:absolute;left:0;top:0" width="24" height="19" viewBox="0 0 24 19"><rect x="9.3" y="6.4" width="5.4" height="5.6" fill="#fff" opacity="0.45"/><g fill="none" stroke="#f0f3ff" stroke-width="1.3"><path d="M8.6 6V11.8Q8.6 13.1 9.9 13.1H14.1Q15.4 13.1 15.4 11.8V6"/><path d="M6.8 5.35H16.9"/><path d="M10.6 5.2V3.5H13.4V5.2"/></g></svg></div>
<div class="hl" style="top:858px"></div>
<div class="t " style="left:468.80px;top:880.72px;font-size:14.50px;font-weight:400;letter-spacing:0.000px;color:#3d4246;transform:scaleX(1.12);transform-origin:0 0;">Calcetines!</div>
<div class="t num" style="left:759.90px;top:880.72px;font-size:14.50px;font-weight:400;letter-spacing:0.000px;color:#3d4246;transform:scaleX(1.12);transform-origin:0 0;letter-spacing:0px"><span style="margin-right:-1.8px">1</span> €</div>
<div class="t num" style="left:846.00px;top:880.72px;font-size:14.50px;font-weight:400;letter-spacing:0.000px;color:#3d4246;">0</div>
<div class="t num" style="left:1072.20px;top:880.72px;font-size:14.50px;font-weight:400;letter-spacing:0.000px;color:#3d4246;">0</div>
<div class="t num" style="left:1190.60px;top:880.72px;font-size:14.50px;font-weight:400;letter-spacing:0.000px;color:#3d4246;transform:scaleX(1.12);transform-origin:0 0;letter-spacing:0px">0 €</div>
<div class="t num" style="left:1294.80px;top:880.72px;font-size:14.50px;font-weight:400;letter-spacing:0.000px;color:#3d4246;">6</div>
<svg class="img" style="top:873px" width="32" height="30" viewBox="0 0 32 30"><rect width="32" height="30" fill="#e7e7e9"/><rect x="0" y="0" width="7" height="30" fill="#dcdcde" opacity="0.5"/><path d="M14 6L19 0H28L23 8L20 11H14Z" fill="#e6b597"/><g transform="rotate(35 9 15)"><rect x="5" y="7" width="8" height="13" fill="#f3f3f3"/><rect x="5" y="9" width="2" height="2" fill="#505050"/><rect x="9" y="9" width="2" height="2" fill="#505050"/><rect x="7" y="11" width="2" height="2" fill="#505050"/><rect x="11" y="11" width="2" height="2" fill="#505050"/><rect x="5" y="13" width="2" height="2" fill="#505050"/><rect x="9" y="13" width="2" height="2" fill="#505050"/><rect x="7" y="15" width="2" height="2" fill="#505050"/><rect x="11" y="15" width="2" height="2" fill="#505050"/><rect x="5" y="17" width="2" height="2" fill="#505050"/><rect x="9" y="17" width="2" height="2" fill="#505050"/></g><path d="M14 12H20L23 21L25 23H13.5Z" fill="#f2f2f2"/><g fill="#555"><rect x="14" y="14" width="2" height="2"/><rect x="18" y="14" width="2" height="2"/><rect x="16" y="16" width="2" height="2"/><rect x="14" y="18" width="2" height="2"/><rect x="18" y="18" width="2" height="2"/><rect x="16" y="20" width="1.5" height="2"/><rect x="20" y="20" width="1.5" height="2"/></g></svg>
<div class="vis" style="top:881px"></div>
<div class="t " style="left:987.10px;top:883.80px;font-size:10.75px;font-weight:700;letter-spacing:0.023px;color:#fff;">Visible</div>
<div class="ab" style="left:1383px;top:880px"><svg style="position:absolute;left:0;top:0" width="24" height="19" viewBox="0 0 24 19"><g fill="none" stroke="#fff" stroke-width="1.35"><path d="M7.7 8.4C9 6.1 10.5 4.75 12.5 4.75C14.5 4.75 16 6.1 17.3 8.4C16 10.7 14.5 12.05 12.5 12.05C10.5 12.05 9 10.7 7.7 8.4Z"/><circle cx="12.5" cy="8.4" r="1.5" stroke-width="1.2"/></g></svg></div>
<div class="ab" style="left:1413px;top:880px;width:25px"><svg style="position:absolute;left:0;top:0" width="25" height="19" viewBox="0 0 25 19"><path d="M12.9 4.65H9.6Q8.05 4.65 8.05 6.2V11.3Q8.05 12.85 9.6 12.85H14.7Q16.25 12.85 16.25 11.3V8" fill="none" stroke="#dfe5ff" stroke-width="1.5"/><path d="M11.4 9.7L17.1 3.9" stroke="#f4f6ff" stroke-width="2.7" stroke-linecap="round"/><path d="M10.3 11.1L11.0 8.9L12.3 10.3Z" fill="#f4f6ff"/><path d="M11.9 9.2L16.9 4.1" stroke="#8ea2ff" stroke-width="0.6"/></svg></div>
<div class="ab" style="left:1444px;top:880px"><svg style="position:absolute;left:0;top:0" width="24" height="19" viewBox="0 0 24 19"><rect x="9.3" y="6.4" width="5.4" height="5.6" fill="#fff" opacity="0.45"/><g fill="none" stroke="#f0f3ff" stroke-width="1.3"><path d="M8.6 6V11.8Q8.6 13.1 9.9 13.1H14.1Q15.4 13.1 15.4 11.8V6"/><path d="M6.8 5.35H16.9"/><path d="M10.6 5.2V3.5H13.4V5.2"/></g></svg></div>
<div class="hl" style="top:917px"></div>
<div class="t " style="left:468.80px;top:939.72px;font-size:14.50px;font-weight:400;letter-spacing:0.000px;color:#3d4246;transform:scaleX(1.12);transform-origin:0 0;">Un reloj de metal para hombre</div>
<div class="t num" style="left:759.90px;top:939.72px;font-size:14.50px;font-weight:400;letter-spacing:0.000px;color:#3d4246;transform:scaleX(1.12);transform-origin:0 0;letter-spacing:0px">200 €</div>
<div class="t num" style="left:846.00px;top:939.72px;font-size:14.50px;font-weight:400;letter-spacing:0.000px;color:#3d4246;">0</div>
<div class="t num" style="left:1072.20px;top:939.72px;font-size:14.50px;font-weight:400;letter-spacing:0.000px;color:#3d4246;">0</div>
<div class="t num" style="left:1190.60px;top:939.72px;font-size:14.50px;font-weight:400;letter-spacing:0.000px;color:#3d4246;transform:scaleX(1.12);transform-origin:0 0;letter-spacing:0px">0 €</div>
<div class="t num" style="left:1294.80px;top:939.72px;font-size:14.50px;font-weight:400;letter-spacing:0.000px;color:#3d4246;">4</div>
<svg class="img" style="top:932px" width="32" height="30" viewBox="0 0 32 30"><rect width="32" height="30" fill="#fbfbfb"/><path d="M3 1H19L22 10L20 20L17 29.6H6L3 20L1.5 10Z" fill="#bfb9b2"/><g fill="#151515"><rect x="3" y="2" width="3" height="3"/><rect x="3" y="7" width="3" height="3"/><rect x="3" y="12" width="3" height="3"/><rect x="4" y="20" width="4" height="2.5"/><rect x="6" y="25" width="4" height="2.5"/><rect x="9" y="2.5" width="8" height="1.3"/><rect x="10" y="6" width="8" height="1.3"/><rect x="11" y="23" width="7" height="1.3"/><rect x="12" y="27" width="6" height="1.3"/></g><ellipse cx="15.1" cy="14.3" rx="7.6" ry="5.3" fill="#262626"/><ellipse cx="15.1" cy="14.3" rx="7.6" ry="5.3" fill="none" stroke="#a89880" stroke-width="0.6"/><rect x="23.5" y="23.5" width="8" height="1.5" fill="#999" opacity="0.6"/></svg>
<div class="vis" style="top:940px"></div>
<div class="t " style="left:987.10px;top:942.80px;font-size:10.75px;font-weight:700;letter-spacing:0.023px;color:#fff;">Visible</div>
<div class="ab" style="left:1383px;top:939px"><svg style="position:absolute;left:0;top:0" width="24" height="19" viewBox="0 0 24 19"><g fill="none" stroke="#fff" stroke-width="1.35"><path d="M7.7 8.4C9 6.1 10.5 4.75 12.5 4.75C14.5 4.75 16 6.1 17.3 8.4C16 10.7 14.5 12.05 12.5 12.05C10.5 12.05 9 10.7 7.7 8.4Z"/><circle cx="12.5" cy="8.4" r="1.5" stroke-width="1.2"/></g></svg></div>
<div class="ab" style="left:1413px;top:939px;width:25px"><svg style="position:absolute;left:0;top:0" width="25" height="19" viewBox="0 0 25 19"><path d="M12.9 4.65H9.6Q8.05 4.65 8.05 6.2V11.3Q8.05 12.85 9.6 12.85H14.7Q16.25 12.85 16.25 11.3V8" fill="none" stroke="#dfe5ff" stroke-width="1.5"/><path d="M11.4 9.7L17.1 3.9" stroke="#f4f6ff" stroke-width="2.7" stroke-linecap="round"/><path d="M10.3 11.1L11.0 8.9L12.3 10.3Z" fill="#f4f6ff"/><path d="M11.9 9.2L16.9 4.1" stroke="#8ea2ff" stroke-width="0.6"/></svg></div>
<div class="ab" style="left:1444px;top:939px"><svg style="position:absolute;left:0;top:0" width="24" height="19" viewBox="0 0 24 19"><rect x="9.3" y="6.4" width="5.4" height="5.6" fill="#fff" opacity="0.45"/><g fill="none" stroke="#f0f3ff" stroke-width="1.3"><path d="M8.6 6V11.8Q8.6 13.1 9.9 13.1H14.1Q15.4 13.1 15.4 11.8V6"/><path d="M6.8 5.35H16.9"/><path d="M10.6 5.2V3.5H13.4V5.2"/></g></svg></div>
<div class="hl" style="top:976px"></div>
<svg class="img" style="top:991px" width="32" height="30" viewBox="0 0 32 30"><rect width="32" height="30" fill="#8b1a24"/><rect width="32" height="2.3" fill="#050808"/><rect x="9" y="0" width="13.3" height="1.6" fill="#f2eedc"/></svg>

</body>
</html>
